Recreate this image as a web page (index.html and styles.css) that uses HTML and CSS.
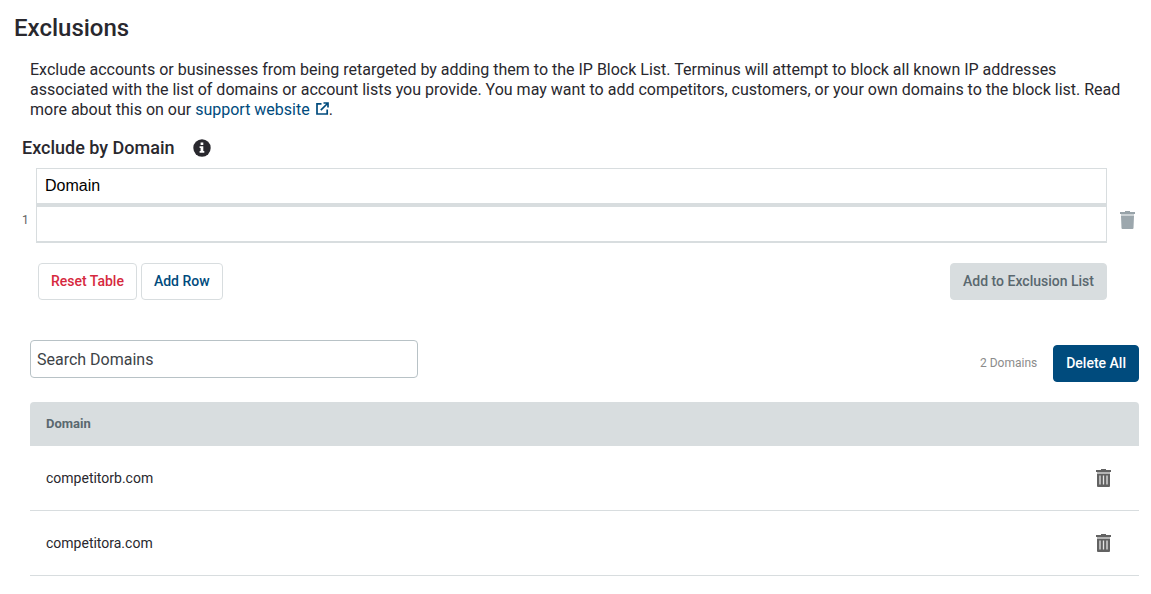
FILE: index.html
```
<!DOCTYPE html>
<html lang="en">
<head>
    <meta charset="UTF-8">
    <meta name="viewport" content="width=device-width, initial-scale=1.0">
    <title>Exclusions</title>
    <link rel="stylesheet" href="styles.css">
</head>
<body>
    <h1>Exclusions</h1>

    <p class="intro">
        Exclude accounts or businesses from being retargeted by adding them to the IP Block List. Terminus will attempt to block all known IP addresses<br>
        associated with the list of domains or account lists you provide. You may want to add competitors, customers, or your own domains to the block list. Read<br>
        more about this on our <a href="#">support website<svg class="external-icon" viewBox="0 0 13 13" aria-hidden="true">
            <path d="M5.500 1.800H1v10.200h10.200V7.500M7.500 1H12v4.500M12 1L4.800 8.200" fill="none" stroke="currentColor" stroke-width="1.700"/>
        </svg></a>.
    </p>

    <form class="exclude-form">
        <h2>
            Exclude by Domain
            <svg class="info-icon" viewBox="0 0 18 18" role="img" aria-label="Info">
                <circle cx="9" cy="9" r="8.700" fill="currentColor"/>
                <path d="M7.600 3.500h2.700v2.400H7.600zM6.600 7.200h3.700v4.700h1v1.800H6.600v-1.800h1V9h-1z" fill="#fff"/>
            </svg>
        </h2>

        <table class="entry-table">
            <thead>
                <tr>
                    <td></td>
                    <th>Domain</th>
                    <td></td>
                </tr>
            </thead>
            <tbody>
                <tr>
                    <td class="row-number">1</td>
                    <td class="entry"><input type="text" aria-label="Domain 1"></td>
                    <td class="row-action">
                        <button type="button" class="icon-btn" aria-label="Remove row 1">
                            <svg viewBox="0 0 15 18">
                                <path d="M0 1h5V0h5v1h5v2H0z" fill="#98a3a9"/>
                                <path d="M1 3h13v2H1z" fill="#cdd3d6"/>
                                <path d="M1 5h13l-.5 12q0 1-1 1h-10q-1 0-1-1z" fill="#9ca7ad"/>
                            </svg>
                        </button>
                    </td>
                </tr>
            </tbody>
        </table>

        <div class="form-actions">
            <button type="reset" class="btn reset">Reset Table</button>
            <button type="button" class="btn add-row">Add Row</button>
            <button type="submit" class="btn submit" disabled>Add to Exclusion List</button>
        </div>
    </form>

    <div class="domain-list">
        <div class="toolbar">
            <input type="text" class="search" placeholder="Search Domains" aria-label="Search Domains">
            <div class="toolbar-right">
                <span class="count">2 Domains</span>
                <button type="button" class="btn delete-all">Delete All</button>
            </div>
        </div>

        <table class="domains">
            <thead>
                <tr>
                    <th>Domain</th>
                    <td></td>
                </tr>
            </thead>
            <tbody>
                <tr>
                    <td>competitorb.com</td>
                    <td class="domain-action">
                        <button type="button" class="icon-btn" aria-label="Delete competitorb.com">
                            <svg viewBox="0 0 15 18">
                                <path d="M0 1h5V0h5v1h5v2H0z" fill="#626262"/>
                                <path d="M1 3h13v2H1z" fill="#b5b5b5"/>
                                <path d="M1 5h13v12q0 1-1 1H2q-1 0-1-1z" fill="#626262"/>
                                <path d="M4 6.500v9M7.500 6.500v9M11 6.500v9" stroke="#e4e4e4" stroke-width="1.300"/>
                            </svg>
                        </button>
                    </td>
                </tr>
                <tr>
                    <td>competitora.com</td>
                    <td class="domain-action">
                        <button type="button" class="icon-btn" aria-label="Delete competitora.com">
                            <svg viewBox="0 0 15 18">
                                <path d="M0 1h5V0h5v1h5v2H0z" fill="#626262"/>
                                <path d="M1 3h13v2H1z" fill="#b5b5b5"/>
                                <path d="M1 5h13v12q0 1-1 1H2q-1 0-1-1z" fill="#626262"/>
                                <path d="M4 6.500v9M7.500 6.500v9M11 6.500v9" stroke="#e4e4e4" stroke-width="1.300"/>
                            </svg>
                        </button>
                    </td>
                </tr>
            </tbody>
        </table>
    </div>
</body>
</html>
```
FILE: styles.css
```
* {
    box-sizing: border-box;
}
body {
    margin: 0;
    padding: 12px 0 0;
    font-family: Roboto, Arial, sans-serif;
    font-size: 16px;
    line-height: 20px;
    color: #29282e;
    background-color: #fff;
}
h1 {
    margin: 0 14px;
    font-size: 24px;
    line-height: 32px;
    font-weight: 500;
}
.intro {
    margin: 16px 0 0;
    padding: 0 6px 0 30px;
}
.intro a {
    color: #004b7d;
    text-decoration: none;
}
.external-icon {
    width: 13px;
    height: 13px;
    margin-left: 6px;
}
h2 {
    display: flex;
    align-items: center;
    gap: 18px;
    margin: 0;
    font-size: 18px;
    line-height: 24px;
    font-weight: 500;
}
.info-icon {
    width: 18px;
    height: 18px;
}

/* domain entry */
.exclude-form {
    margin: 16px 12px 0 22px;
}
table {
    width: 100%;
    border-collapse: separate;
    border-spacing: 0;
}
.entry-table {
    margin-top: 8px;
}
.entry-table th {
    height: 39px;
    padding: 0 8px;
    border: 1px solid #d8dddf;
    border-bottom-width: 4px;
    font-family: "Liberation Sans", Arial, sans-serif;
    font-weight: 400;
    text-align: left;
    color: #000;
}
.entry-table td {
    padding: 0;
}
.entry-table .row-number {
    width: 14px;
    padding-bottom: 10px;
    font-size: 12px;
    color: #626262;
}
.entry-table .entry {
    height: 36px;
    border: 1px solid #d8dddf;
    border-top: none;
    border-bottom-width: 2px;
}
.entry input {
    display: block;
    width: 100%;
    height: 33px;
    padding: 0 8px;
    border: none;
    font: inherit;
}
.entry-table .row-action {
    width: 32px;
    padding: 0 4px 10px 13px;
}
.icon-btn {
    display: block;
    padding: 0;
    border: none;
    background: none;
    cursor: pointer;
}
.icon-btn svg {
    display: block;
    width: 15px;
    height: 18px;
}
.form-actions {
    display: flex;
    gap: 4px;
    margin: 20px 32px 0 16px;
}
.btn {
    height: 37px;
    padding: 0 12px 2px;
    border: 1px solid #d8dddf;
    border-radius: 4px;
    background-color: #fff;
    font-family: inherit;
    font-size: 14px;
    font-weight: 500;
    cursor: pointer;
}
.btn.reset {
    color: #d6293e;
}
.btn.add-row {
    color: #004b7d;
}
.btn.submit {
    margin-left: auto;
    background-color: #d8dddf;
    color: #5a686f;
    cursor: default;
}
.btn.delete-all {
    border-color: #004b7d;
    background-color: #004b7d;
    color: #fff;
}

/* excluded domains */
.domain-list {
    margin: 40px 12px 0 30px;
}
.toolbar {
    display: flex;
    justify-content: space-between;
}
.search {
    width: 35%;
    height: 38px;
    padding: 0 6px;
    border: 1px solid #b8c2c6;
    border-radius: 4px;
    font: inherit;
}
.search::placeholder {
    color: #3d4347;
}
.toolbar-right {
    display: flex;
    align-items: center;
    gap: 16px;
    padding-top: 5px;
}
.count {
    padding-bottom: 2px;
    font-size: 12px;
    color: #8b8b8b;
}
.domains {
    margin-top: 20px;
    font-size: 14px;
}
.domains thead th,
.domains thead td {
    height: 44px;
    background-color: #d8dddf;
}
.domains th {
    padding: 0 16px;
    border-top-left-radius: 4px;
    font-size: 13px;
    text-align: left;
    color: #5a686f;
}
.domains thead td {
    border-top-right-radius: 4px;
}
.domains tbody td {
    height: 65px;
    padding: 0 16px;
    border-bottom: 1px solid #d8dddf;
}
.domains tbody .domain-action {
    width: 59px;
}
```
